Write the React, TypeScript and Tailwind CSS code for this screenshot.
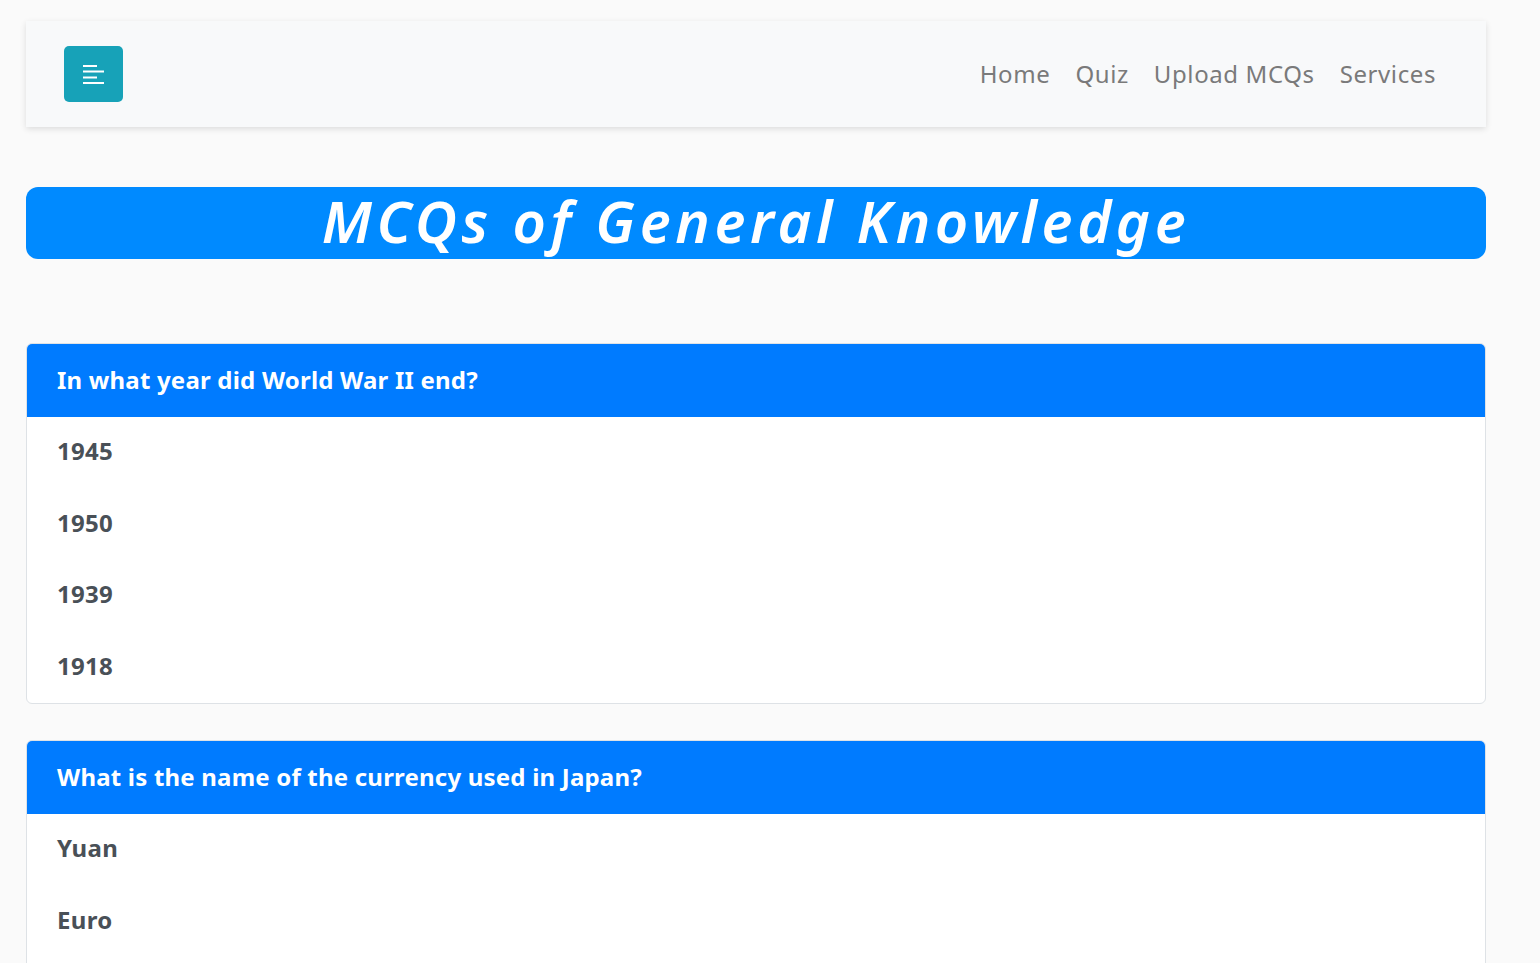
import React from 'react';

const questions = [
  { q: 'In what year did World War II end?', options: ['1945', '1950', '1939', '1918'] },
  { q: 'What is the name of the currency used in Japan?', options: ['Yuan', 'Euro', 'Yen', 'Won'] },
  { q: 'Which planet is known as the Red Planet?', options: ['Venus', 'Mars', 'Jupiter', 'Saturn'] },
];

const MenuIcon = () => (
  <svg width="22" height="20" viewBox="0 0 22 20" fill="none">
    <rect x="0" y="1" width="14" height="2" fill="white" />
    <rect x="0" y="6.5" width="21" height="2" fill="white" />
    <rect x="0" y="12.5" width="14" height="2" fill="white" />
    <rect x="0" y="18" width="21" height="2" fill="white" />
  </svg>
);

const App = () => {
  return (
    <div className="min-h-screen bg-[#fafafa] pt-[21px] pb-10 font-['Noto_Sans',sans-serif]">
      <div className="ml-[26px] w-[1460px]">
        {/* Navbar */}
        <nav className="h-[106px] bg-[#f8f9fa] shadow-[0_2px_6px_rgba(0,0,0,0.12)] flex items-center justify-between pl-[38px] pr-[50px]">
          <button className="w-[59px] h-[56px] rounded-[5px] bg-[#17a2b8] flex items-center justify-center">
            <MenuIcon />
          </button>
          <ul className="flex items-center gap-[25px] text-[24px] text-[#7a7a7a] tracking-[0.6px]">
            <li>Home</li>
            <li>Quiz</li>
            <li>Upload MCQs</li>
            <li>Services</li>
          </ul>
        </nav>

        {/* Title */}
        <div className="mt-[60px] h-[72px] rounded-[12px] bg-[#008aff] flex items-center justify-center">
          <h1 className="text-white italic font-semibold text-[58px] leading-none tracking-[4.6px] pb-1">
            MCQs of General Knowledge
          </h1>
        </div>

        {/* Questions */}
        <div className="mt-[84px] flex flex-col gap-[36px]">
          {questions.map((item, index) => (
            <div key={index} className="bg-white border border-[#dee2e6] rounded-[6px] overflow-hidden">
              <div className="h-[74px] -mx-px -mt-px bg-[#007bff] flex items-center px-[31px] rounded-t-[6px]">
                <h2 className="text-white font-bold text-[24px] tracking-[0.2px]">{item.q}</h2>
              </div>
              {item.options.map((opt, i) => (
                <div key={i} className="h-[71.5px] flex items-center px-[30px] pb-[3px] text-[24px] font-bold text-[#495057] tracking-[0.3px]">
                  {opt}
                </div>
              ))}
            </div>
          ))}
        </div>
      </div>
    </div>
  );
};

export default App;
